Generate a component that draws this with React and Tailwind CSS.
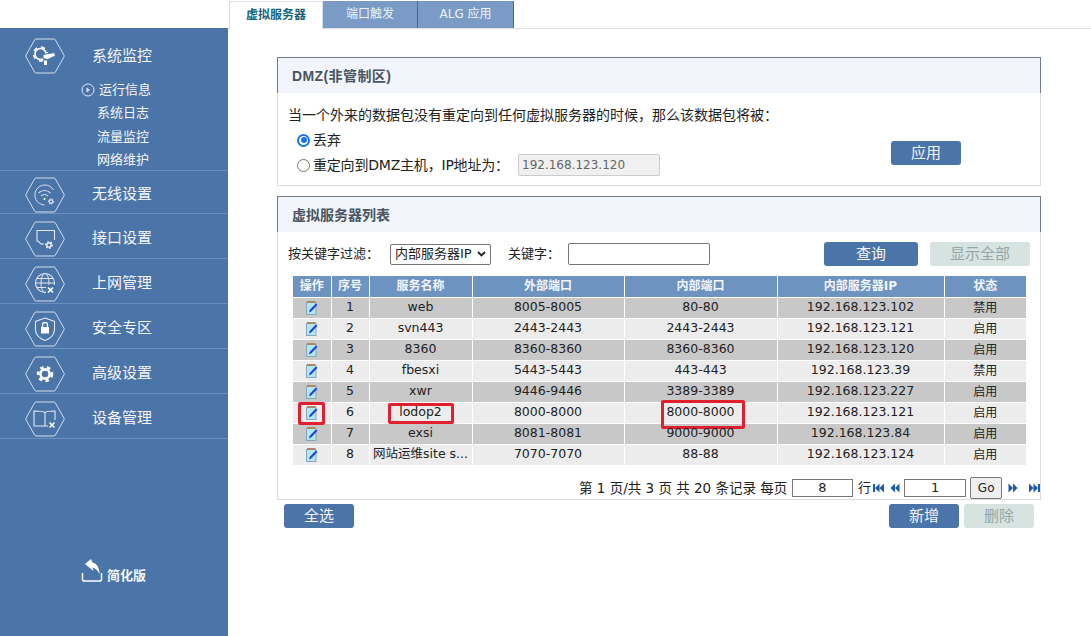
import React from "react";

const navItems = [
  { label: "无线设置", icon: "wifi" },
  { label: "接口设置", icon: "port" },
  { label: "上网管理", icon: "globe" },
  { label: "安全专区", icon: "shield" },
  { label: "高级设置", icon: "gear" },
  { label: "设备管理", icon: "book" },
];

const rows = [
  [1, "web", "8005-8005", "80-80", "192.168.123.102", "禁用"],
  [2, "svn443", "2443-2443", "2443-2443", "192.168.123.121", "启用"],
  [3, "8360", "8360-8360", "8360-8360", "192.168.123.120", "启用"],
  [4, "fbesxi", "5443-5443", "443-443", "192.168.123.39", "禁用"],
  [5, "xwr", "9446-9446", "3389-3389", "192.168.123.227", "启用"],
  [6, "lodop2", "8000-8000", "8000-8000", "192.168.123.121", "启用"],
  [7, "exsi", "8081-8081", "9000-9000", "192.168.123.84", "启用"],
  [8, "网站运维site s...", "7070-7070", "88-88", "192.168.123.124", "启用"],
];

const Gear = ({ cx, cy, r = 3, w = 1.3 }) => (
  <g fill="none" stroke="#fff">
    <circle cx={cx} cy={cy} r={r} strokeWidth={w} />
    <circle cx={cx} cy={cy} r={r + w * 0.9} strokeWidth={w} strokeDasharray={`${r * 0.75} ${r * 0.75}`} />
  </g>
);

const Cross = ({ cx, cy }) => (
  <path d={`M${cx - 2.5} ${cy - 2.5}l5 5m0-5l-5 5`} stroke="#fff" strokeWidth="1.6" fill="none" />
);

const glyphs = {
  monitor: (
    <>
      <Gear cx={15.500} cy={16} r={5.500} w={1.600} />
      <path d="M18 16.500l11.500-2 1 3.500-8 3.500-4.500-1z" fill="#fff" stroke="#4b74a8" strokeWidth="1" />
      <path d="M19 22.500h3v4.500h-3z" fill="#fff" />
    </>
  ),
  wifi: (
    <>
      <path d="M28.500 13a10 10 0 1 0-9 15" fill="none" stroke="#d7e0ee" strokeWidth="1" />
      <path d="M13.500 16a8.500 8.500 0 0 1 12 0M16 19a5 5 0 0 1 7 0" fill="none" stroke="#d7e0ee" strokeWidth="1.100" />
      <circle cx="19.500" cy="22" r="1" fill="#fff" />
      <Gear cx={26} cy={24.500} r={1.700} w={1} />
    </>
  ),
  port: (
    <>
      <path d="M19 23h-3l-3-3H12V9.500h17.500V19" fill="none" stroke="#e4eaf4" strokeWidth="1.100" />
      <Gear cx={24} cy={24} r={2.200} w={1.200} />
    </>
  ),
  globe: (
    <>
      <circle cx="20" cy="17" r="9.500" fill="none" stroke="#dfe6f1" strokeWidth="1.100" />
      <ellipse cx="20" cy="17" rx="4" ry="9.500" fill="none" stroke="#dfe6f1" />
      <path d="M10.500 17h19M12 12.500h16M12 21.500h16" fill="none" stroke="#dfe6f1" />
      <rect x="21" y="19" width="9" height="9" fill="#4b74a8" />
      <Cross cx={25.500} cy={24} />
    </>
  ),
  shield: (
    <>
      <path d="M20 7l9.500 3.500v8c0 5-4 9-9.500 11-5.500-2-9.500-6-9.500-11v-8z" fill="none" stroke="#e4eaf4" strokeWidth="1.100" />
      <path d="M16 16h8v6.500h-8z" fill="#fff" />
      <path d="M17.500 16v-2a2.500 2.500 0 0 1 5 0v2" fill="none" stroke="#fff" strokeWidth="1.300" />
    </>
  ),
  gear: <Gear cx={20} cy={18} r={4.600} w={2.600} />,
  book: (
    <>
      <path d="M20 11.500c-2-1.500-5-1.500-11-1.500v15h11zM20 11.500c2-1.500 5-1.500 10-1.500v9M20 25h3" fill="none" stroke="#e4eaf4" strokeWidth="1.100" />
      <Cross cx={27} cy={24} />
    </>
  ),
};

function HexIcon({ name }) {
  return (
    <svg width="40" height="36" viewBox="0 0 40 36" className="shrink-0">
      <path d="M11 1h18a1.500 1.500 0 0 1 1.300.8l8.700 15.400a1.500 1.500 0 0 1 0 1.600l-8.700 15.400a1.500 1.500 0 0 1-1.300.8H11a1.500 1.500 0 0 1-1.300-.8L1 18.800a1.500 1.500 0 0 1 0-1.600L9.700 1.800A1.500 1.500 0 0 1 11 1z" fill="none" stroke="#d5dfee" strokeWidth="1" />
      {glyphs[name]}
    </svg>
  );
}

function EditIcon() {
  return (
    <svg width="12" height="14" viewBox="0 0 12 14" className="inline-block align-middle">
      <rect x="0.500" y="1.500" width="9.500" height="12" fill="#b4e6f0" stroke="#8aa6bd" />
      <rect x="1" y="0" width="8.500" height="2" fill="#a98a68" />
      <path d="M3 11.500l.6-2.500L9.800 2.500l1.700 1.300-6 6.400z" fill="#1748d8" />
    </svg>
  );
}

function PageIcon({ dir, bar }) {
  const flip = dir === "right";
  return (
    <svg width="11" height="10" viewBox="0 0 11 10" className={flip ? "rotate-180" : ""}>
      {bar && <rect x="0" y="1" width="2" height="8" fill="#1f5aa8" />}
      <path d={bar ? "M6.500 0.500v9L2 5zM11 0.500v9L6.500 5z" : "M6 0.500v9L1.500 5zM10.500 0.500v9L6 5z"} fill="#1f5aa8" />
    </svg>
  );
}

function Btn({ w, off, children }) {
  return (
    <button className={`h-6 ${w} rounded-[3px] text-[15px] leading-6 ${off ? "bg-[#d6e3e1] text-[#93a7a6]" : "bg-[#4b74a8] text-[#f2f5fa]"}`}>
      {children}
    </button>
  );
}

function Panel({ title, className, children }) {
  return (
    <section className={`border border-t-0 border-[#dcdcdc] ${className}`}>
      <h2 className="h-9 -mx-px border border-b-0 border-[#6f7b88] bg-[#f2f6fc] pl-[14px] font-['Liberation_Sans','Noto_Sans_CJK_SC',sans-serif] text-[14px] font-bold leading-[37px] text-[#4a5560]">
        {title}
      </h2>
      {children}
    </section>
  );
}

const RedBox = ({ className }) => (
  <span className={`pointer-events-none absolute rounded-[2px] border-[3px] border-[#e0202e] ${className}`} />
);

export default function App() {
  return (
    <div className="flex h-[636px] w-[1091px] flex-col overflow-hidden bg-white font-['DejaVu_Sans','Noto_Sans_CJK_SC',sans-serif] text-[13px] text-[#222]">
      {/* Tabs */}
      <div className="flex h-[29px] shrink-0 border-b border-[#dddddd] pl-[229px] pt-px">
        <div className="h-[28px] w-[94px] border-x border-t border-[#d8dfe8] bg-white text-center text-[12px] font-bold leading-[26px] text-[#14647f]">虚拟服务器</div>
        <div className="h-[27px] w-[95px] border-r border-[#55657a] bg-[#7a9bc6] text-center text-[12px] leading-[27px] text-[#eef3fa]">端口触发</div>
        <div className="h-[27px] w-[96px] border-r border-[#55657a] bg-[#7a9bc6] text-center text-[12px] leading-[27px] text-[#eef3fa]">ALG 应用</div>
      </div>

      <div className="flex min-h-0 flex-1">
        {/* Sidebar */}
        <aside className="-mt-px flex w-[228px] shrink-0 flex-col bg-[#4b74a8] text-[#f4f6fa]">
          <div className="h-[143px] border-b border-[#6d8fbd]">
            <div className="flex items-center pl-[25px] pt-[10px]">
              <HexIcon name="monitor" />
              <span className="ml-[27px] text-[15px]">系统监控</span>
            </div>
            <ul className="mt-[4px] text-[13px] leading-[23.300px]">
              <li className="flex items-center pl-[81px]">
                <svg width="14" height="14" viewBox="0 0 14 14" className="mr-[4px]">
                  <circle cx="7" cy="7" r="6" fill="none" stroke="#e4eaf4" />
                  <path d="M5.500 4.500v5l3.500-2.500z" fill="#e4eaf4" />
                </svg>
                运行信息
              </li>
              <li className="pl-[97px]">系统日志</li>
              <li className="pl-[97px]">流量监控</li>
              <li className="pl-[97px]">网络维护</li>
            </ul>
          </div>
          {navItems.map((item, i) => (
            <div key={item.label} className={`flex items-center border-b border-[#6d8fbd] pl-[25px] pt-[5px] ${i === 0 ? "h-[43px]" : "h-[45px]"}`}>
              <HexIcon name={item.icon} />
              <span className="ml-[27px] text-[15px]">{item.label}</span>
            </div>
          ))}
          <div className="mt-[118px] flex items-center pl-[81px]">
            <svg width="22" height="24" viewBox="0 0 22 24">
              <path d="M1.500 14v6.500a1.500 1.500 0 0 0 1.500 1.500h16a1.500 1.500 0 0 0 1.500-1.500V14" fill="none" stroke="#fff" strokeWidth="1.500" />
              <path d="M4 5l6-5 1.500 3.500c4 .8 7 5 7 11.500-2-4-4.500-6-7-6.500l1 3.500z" fill="#fff" />
            </svg>
            <span className="ml-[4px] mt-[9px] text-[13px] font-bold">简化版</span>
          </div>
        </aside>

        {/* Content */}
        <main className="min-w-0 flex-1 pl-[49px] pt-[28px]">
          <div className="w-[764px]">
            <Panel title={<span className="tracking-[0.4px]">DMZ(非管制区)</span>} className="h-[129px]">
              <div className="flex">
                <div className="w-[613px] pl-[10px] pt-[12px] text-[14px]">
                  <p className="leading-5 whitespace-nowrap">当一个外来的数据包没有重定向到任何虚拟服务器的时候，那么该数据包将被：</p>
                  <label className="mt-[5px] flex h-5 items-center pl-[9px]">
                    <span className="h-[13px] w-[13px] rounded-full border-2 border-[#1a73e8] bg-white p-[1.500px]">
                      <span className="block h-full w-full rounded-full bg-[#1a73e8]" />
                    </span>
                    <span className="ml-[3px]">丢弃</span>
                  </label>
                  <label className="mt-[3px] flex h-[24px] items-center pl-[9px]">
                    <span className="h-[13px] w-[13px] rounded-full border border-[#767676] bg-white" />
                    <span className="ml-[3px] w-[205px] whitespace-nowrap tracking-[-0.2px]">重定向到DMZ主机，IP地址为：</span>
                    <span className="h-[22px] w-[142px] rounded-[2px] border border-[#cccccc] bg-[#f0f0f0] pl-[3px] text-[12px] leading-[21px] text-[#666]">192.168.123.120</span>
                  </label>
                </div>
                <div className="pt-[48px]">
                  <Btn w="w-[70px]">应用</Btn>
                </div>
              </div>
            </Panel>

            <Panel title="虚拟服务器列表" className="mt-[10px] h-[304px]">
              <div className="flex h-[44px] items-center pl-[10px]">
                <span>按关键字过滤：</span>
                <span className="ml-[11px] flex h-[21px] w-[101px] items-center justify-between rounded-[2px] border border-[#767676] px-[4px] text-[13px]">
                  内部服务器IP
                  <svg width="9" height="6" viewBox="0 0 9 6"><path d="M1 1l3.500 3.500L8 1" fill="none" stroke="#222" strokeWidth="1.800" /></svg>
                </span>
                <span className="ml-[17px]">关键字：</span>
                <span className="ml-[8px] h-[22px] w-[142px] rounded-[2px] border border-[#767676] bg-white" />
                <div className="ml-[114px] flex gap-3">
                  <Btn w="w-[94px]">查询</Btn>
                  <Btn w="w-[100px]" off>显示全部</Btn>
                </div>
              </div>

              <table className="ml-[15px] w-[733px] table-fixed border-collapse text-center text-[12.500px]">
                <colgroup>
                  <col className="w-[38px]" />
                  <col className="w-[38px]" />
                  <col className="w-[103px]" />
                  <col className="w-[152px]" />
                  <col className="w-[153px]" />
                  <col className="w-[167px]" />
                  <col />
                </colgroup>
                <thead>
                  <tr className="h-[21px] bg-[#6d94c0] text-[12px] font-bold text-[#f2f5fa]">
                    {["操作", "序号", "服务名称", "外部端口", "内部端口", "内部服务器IP", "状态"].map((h) => (
                      <th key={h} className="border border-white border-t-0 p-0 font-bold first:border-l-0 last:border-r-0">{h}</th>
                    ))}
                  </tr>
                </thead>
                <tbody>
                  {rows.map((r) => (
                    <tr key={r[0]} className={`h-[21px] ${r[0] % 2 ? "bg-[#c8c8c8]" : "bg-[#ececec]"}`}>
                      <td className="relative border border-white p-0 first:border-l-0">
                        <EditIcon />
                        {r[0] === 6 && <RedBox className="left-[5px] top-[-1px] h-[23px] w-[27px]" />}
                      </td>
                      <td className="border border-white p-0">{r[0]}</td>
                      <td className="relative whitespace-nowrap border border-white p-0">
                        {r[1]}
                        {r[0] === 6 && <RedBox className="left-[18px] top-0 h-[21px] w-[66px]" />}
                      </td>
                      <td className="border border-white p-0">{r[2]}</td>
                      <td className="relative border border-white p-0">
                        {r[3]}
                        {r[0] === 6 && <RedBox className="left-[36px] top-[-3px] h-[29px] w-[84px]" />}
                      </td>
                      <td className="border border-white p-0">{r[4]}</td>
                      <td className="border border-white p-0 text-[12px] last:border-r-0">{r[5]}</td>
                    </tr>
                  ))}
                </tbody>
              </table>

              <div className="mt-[11px] flex h-[23px] items-center pl-[301px]">
                <span className="w-[215px] whitespace-nowrap text-[13.500px]">第 1 页/共 3 页 共 20 条记录 每页</span>
                <span className="h-[18px] w-[62px] border border-[#767676] text-center text-[13px] leading-4">8</span>
                <span className="ml-[5px]">行</span>
                <span className="ml-[2px]"><PageIcon dir="left" bar /></span>
                <span className="ml-[5px]"><PageIcon dir="left" /></span>
                <span className="ml-[4px] h-[18px] w-[63px] border border-[#767676] text-center text-[13px] leading-4">1</span>
                <span className="ml-[4px] h-[22px] w-[32px] rounded-[2px] border border-[#767676] bg-[#efefef] text-center text-[12px] leading-5">Go</span>
                <span className="ml-[6px]"><PageIcon dir="right" /></span>
                <span className="ml-[10px]"><PageIcon dir="right" bar /></span>
              </div>
            </Panel>

            <div className="ml-[7px] mt-[4px] flex w-[750px]">
              <Btn w="w-[70px]">全选</Btn>
              <div className="ml-auto flex gap-[5px]">
                <Btn w="w-[70px]">新增</Btn>
                <Btn w="w-[70px]" off>删除</Btn>
              </div>
            </div>
          </div>
        </main>
      </div>
    </div>
  );
}
